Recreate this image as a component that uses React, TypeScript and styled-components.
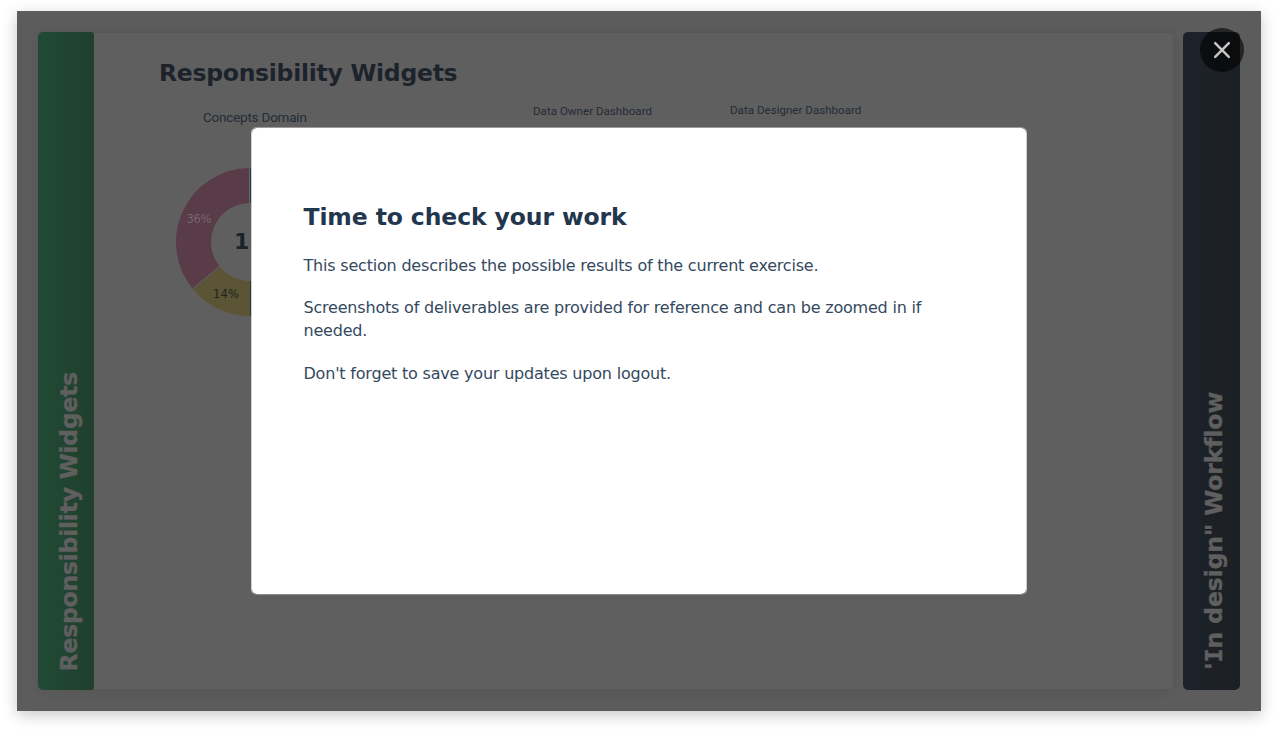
import React from 'react';
import styled, { createGlobalStyle } from 'styled-components';

const Global = createGlobalStyle`
  * { box-sizing: border-box; }
  html, body { margin: 0; background: #fff; }
  body { font-family: Verdana, "DejaVu Sans", sans-serif; overflow: hidden; }
  h1, h2, p { margin: 0; }
`;

const Page = styled.main`
  height: 734px;
  padding: 11px 17px 23px;
`;

const Stage = styled.section`
  position: relative;
  display: flex;
  gap: 9px;
  width: 1244px;
  height: 700px;
  padding: 21px;
  background: #5c5c5c;
  box-shadow: 0 4px 14px rgba(0, 0, 0, 0.22);
`;

const Slide = styled.article`
  display: flex;
  flex: 1;
  height: 658px;
  background: #5f5f5f;
  border: solid #585858;
  border-width: 1px 1px 1px 0;
  border-radius: 5px;
  box-shadow: 0 2px 12px rgba(0, 0, 0, 0.07);
`;

const Tab = styled.div<{ $from: string; $to: string; $width: number }>`
  display: flex;
  flex: none;
  width: ${(p) => p.$width}px;
  height: 658px;
  padding-left: 17px;
  border-radius: 5px;
  background: linear-gradient(90deg, ${(p) => p.$from}, ${(p) => p.$to});
`;

const GreenTab = styled(Tab)`
  margin-top: -1px;
  border-radius: 5px 3px 3px 5px;
`;

const TabLabel = styled.span<{ $spacing: number; $bottom: number }>`
  align-self: flex-end;
  margin-bottom: ${(p) => p.$bottom}px;
  writing-mode: vertical-rl;
  transform: rotate(180deg);
  font-size: 23.5px;
  line-height: 28px;
  font-weight: 700;
  letter-spacing: ${(p) => p.$spacing}px;
  white-space: nowrap;
  color: #5f5f5f;
  -webkit-text-stroke: 0.4px #5f5f5f;
`;

const SerifCap = styled.span`
  font-family: "DejaVu Sans Mono", monospace;
`;

const Body = styled.div`
  display: flex;
  flex-direction: column;
  padding: 25px 0 0 65px;
`;

const SlideTitle = styled.h1`
  font-size: 23.5px;
  line-height: 30px;
  letter-spacing: -0.27px;
  color: #1c232b;
  white-space: nowrap;
`;

const Charts = styled.div`
  display: flex;
  padding: 14px 0 0 16px;
`;

const Chart = styled.div<{ $width: number; $top: number; $indent: number }>`
  width: ${(p) => p.$width}px;
  padding: ${(p) => p.$top}px 0 0;
  text-indent: ${(p) => p.$indent}px;
`;

const ChartTitle = styled.p<{ $size: number; $spacing: number }>`
  font-family: Roboto, sans-serif;
  font-size: ${(p) => p.$size}px;
  line-height: 16px;
  letter-spacing: ${(p) => p.$spacing}px;
  color: #252c35;
  white-space: nowrap;
`;

const Donut = styled.svg`
  display: block;
  margin-top: 42px;
  text-indent: 0;
`;

const Modal = styled.div`
  position: absolute;
  left: 234px;
  top: 116px;
  width: 776px;
  height: 468px;
  padding: 73px 51px 0 51.5px;
  border: 1px solid;
  border-color: #9c9c9c #cfcfcf #8c8c8c #cfcfcf;
  border-radius: 6px;
  background: #fff;
  background-clip: padding-box;
`;

const ModalTitle = styled.h2`
  font-size: 23.5px;
  line-height: 32px;
  letter-spacing: -0.11px;
  color: #22364e;
  margin-bottom: 20.5px;
`;

const Paragraph = styled.p`
  font-size: 16px;
  line-height: 23.5px;
  letter-spacing: -0.2px;
  color: #34495e;
  margin-bottom: 18.8px;
`;

const Close = styled.button`
  position: absolute;
  left: 1183px;
  top: 17px;
  display: grid;
  place-items: center;
  width: 44px;
  height: 44px;
  padding: 0;
  border: 0;
  border-radius: 50%;
  background: rgba(0, 0, 0, 0.6);
`;

export default function App() {
  return (
    <Page>
      <Global />
      <Stage>
        <Slide>
          <GreenTab $from="#214a35" $to="#203f2d" $width={56}>
            <TabLabel $spacing={-0.22} $bottom={19}>Responsibility Widgets</TabLabel>
          </GreenTab>
          <Body>
            <SlideTitle>Responsibility Widgets</SlideTitle>
            <Charts>
              <Chart $width={358} $top={7} $indent={28}>
                <ChartTitle $size={13.5} $spacing={-0.22}>Concepts Domain</ChartTitle>
                <Donut width="150" height="150" viewBox="0 0 150 150">
                  <g fill="none" strokeWidth="35">
                    <path d="M75 18.5A56.5 56.5 0 0 0 31.5 111" stroke="#5a3c49" />
                    <path d="M31.5 111A56.5 56.5 0 0 0 75 131.5" stroke="#5b5435" />
                    <path d="M75 18.5A56.5 56.5 0 0 1 75 131.5" stroke="#1f403e" />
                  </g>
                  <path d="M74.5 1V36M18 121.5L45 99" stroke="#666" />
                  <text x="11.5" y="55.5" fontSize="11.5" fill="#79656e" textLength="25">36%</text>
                  <text x="38" y="130.5" fontSize="11.5" fill="#22231f" textLength="26">14%</text>
                  <text x="59" y="82" fontSize="22" fontWeight="700" fill="#1c232b" letterSpacing="1">14</text>
                </Donut>
              </Chart>
              <Chart $width={197} $top={1} $indent={0}>
                <ChartTitle $size={11.6} $spacing={0}>Data Owner Dashboard</ChartTitle>
              </Chart>
              <Chart $width={197} $top={0} $indent={0}>
                <ChartTitle $size={11.6} $spacing={0}>Data Designer Dashboard</ChartTitle>
              </Chart>
            </Charts>
          </Body>
        </Slide>
        <Tab $from="#1d222b" $to="#1c1f23" $width={57}>
          <TabLabel $spacing={-0.1} $bottom={20}>
            '<SerifCap>I</SerifCap>n design" Workflow
          </TabLabel>
        </Tab>
        <Modal role="dialog">
          <ModalTitle>Time to check your work</ModalTitle>
          <Paragraph>This section describes the possible results of the current exercise.</Paragraph>
          <Paragraph>Screenshots of deliverables are provided for reference and can be zoomed in if needed.</Paragraph>
          <Paragraph>Don't forget to save your updates upon logout.</Paragraph>
        </Modal>
        <Close aria-label="Close">
          <svg width="24" height="24" viewBox="0 0 24 24" fill="none" stroke="#c6c6c6" strokeWidth="2.5" strokeLinecap="round">
            <path d="M5.2 5.2L18.8 18.8M18.8 5.2L5.2 18.8" />
          </svg>
        </Close>
      </Stage>
    </Page>
  );
}
